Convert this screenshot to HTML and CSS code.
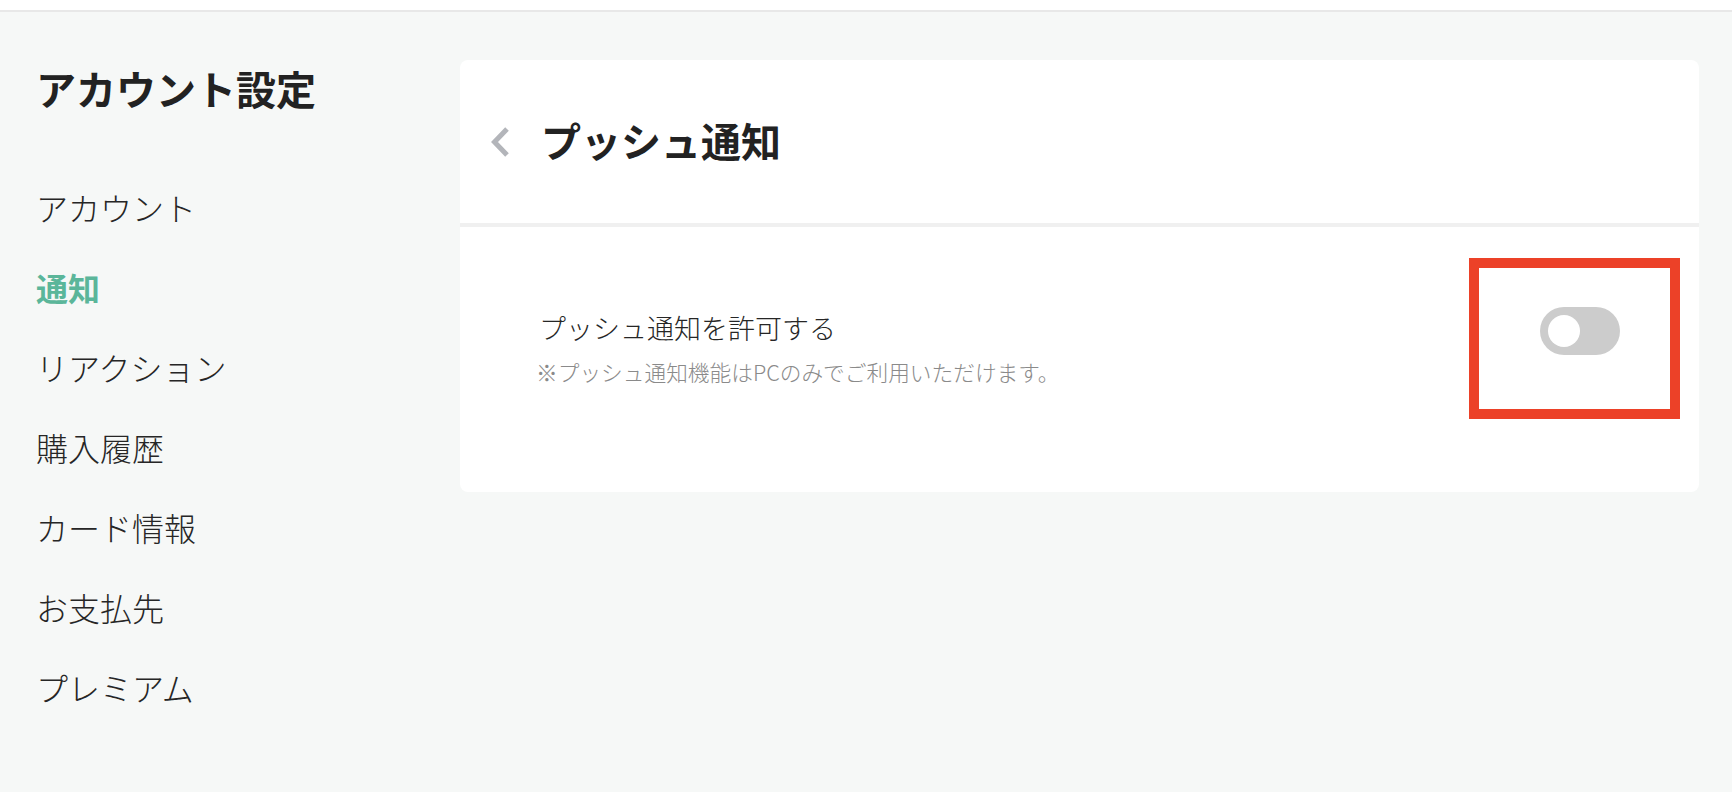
FILE: index.html
```html
<!DOCTYPE html>
<html lang="ja">

<head>
    <meta charset="UTF-8">
    <meta name="viewport" content="width=device-width, initial-scale=1.0">
    <title>プッシュ通知 - アカウント設定</title>
    <link rel="stylesheet" href="styles.css">
</head>

<body>
    <div class="topbar"></div>

    <div class="layout">
        <nav class="sidebar">
            <h1 class="sidebar-title">アカウント設定</h1>
            <ul class="menu">
                <li><a href="#" class="menu-link">アカウント</a></li>
                <li><a href="#" class="menu-link active">通知</a></li>
                <li><a href="#" class="menu-link">リアクション</a></li>
                <li><a href="#" class="menu-link">購入履歴</a></li>
                <li><a href="#" class="menu-link">カード情報</a></li>
                <li><a href="#" class="menu-link">お支払先</a></li>
                <li><a href="#" class="menu-link">プレミアム</a></li>
            </ul>
        </nav>

        <main class="main">
            <div class="card">
                <div class="card-header">
                    <a href="#" class="back-button" aria-label="戻る">
                        <svg width="20" height="32" viewBox="0 0 20 32">
                            <polyline points="17,3 4.5,16 17,29" fill="none" stroke="#b3b5ba" stroke-width="5" />
                        </svg>
                    </a>
                    <h2 class="card-title">プッシュ通知</h2>
                </div>

                <div class="setting-row">
                    <div class="setting-text">
                        <p class="setting-label">プッシュ通知を許可する</p>
                        <p class="setting-note">※プッシュ通知機能はPCのみでご利用いただけます。</p>
                    </div>
                    <label class="toggle">
                        <input type="checkbox" id="pushToggle">
                        <span class="toggle-knob"></span>
                    </label>
                    <!-- annotation box around the toggle -->
                    <div class="highlight"></div>
                </div>
            </div>
        </main>
    </div>
</body>

</html>
```

FILE: styles.css
```css
body {
    margin: 0;
    padding: 0;
    background-color: #f6f8f7;
    color: #242424;
    font-family: "Noto Sans CJK JP", "Noto Sans", sans-serif;
    min-height: 100vh;
}

.topbar {
    height: 10px;
    background-color: white;
    border-bottom: 2px solid #e8e8e8;
}

.layout {
    display: flex;
}

.sidebar {
    width: 424px;
    padding-left: 36px;
    flex-shrink: 0;
}

.sidebar-title {
    margin: 46px 0 0 0;
    font-size: 40px;
    line-height: 60px;
    font-weight: bold;
    color: #222;
}

.menu {
    list-style-type: none;
    margin: 49px 0 0 0;
    padding: 0;
}

.menu-link {
    display: block;
    font-size: 32px;
    line-height: 80px;
    font-weight: 300;
    color: #262626;
    text-decoration: none;
}

.menu-link.active {
    color: #5bb69a;
    font-weight: bold;
}

.main {
    flex: 1;
    padding: 48px 33px 0 0;
}

.card {
    background: white;
    border-radius: 8px;
    overflow: hidden;
}

.card-header {
    display: flex;
    align-items: center;
    gap: 31px;
    height: 163px;
    padding-left: 30px;
    border-bottom: 4px solid #f0f0f0;
}

.back-button {
    display: flex;
    align-items: center;
}

.card-title {
    margin: 0 0 4px 0;
    font-size: 40px;
    line-height: 56px;
    font-weight: bold;
    color: #222;
}

.setting-row {
    position: relative;
    display: flex;
    align-items: flex-start;
    height: 265px;
    box-sizing: border-box;
    padding: 83px 79px 0 79px;
}

.setting-text {
    flex: 1;
}

.setting-label {
    margin: 0;
    font-size: 27px;
    line-height: 36px;
    font-weight: 300;
    color: #262626;
}

.setting-note {
    margin: 11px 0 0 -3px;
    font-size: 21.7px;
    line-height: 30px;
    font-weight: 300;
    color: #8a8a8a;
}

.toggle {
    position: relative;
    display: block;
    width: 80px;
    height: 48px;
    margin-top: -3px;
    border-radius: 24px;
    background-color: #cccccc;
    cursor: pointer;
}

.toggle input {
    display: none;
}

.toggle-knob {
    position: absolute;
    top: 8px;
    left: 8px;
    width: 32px;
    height: 32px;
    border-radius: 50%;
    background-color: white;
}

.highlight {
    position: absolute;
    top: 31px;
    right: 19px;
    width: 211px;
    height: 161px;
    box-sizing: border-box;
    border: 10px solid #ec4128;
    pointer-events: none;
}
```
